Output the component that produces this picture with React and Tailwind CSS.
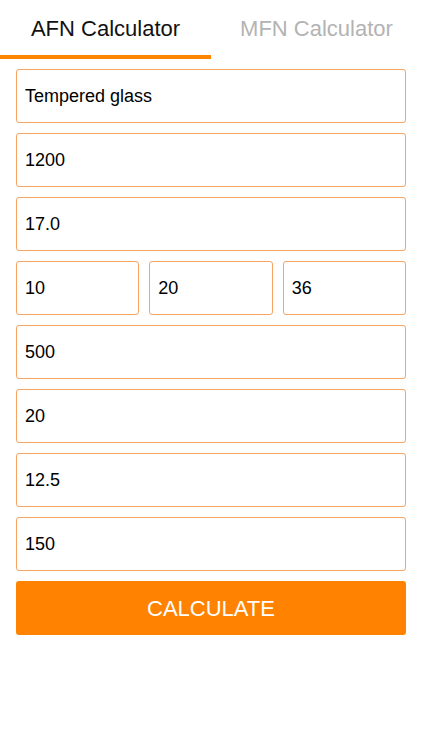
import React from "react";

const font = { fontFamily: '"Liberation Sans", Arial, sans-serif' };

function Field({ value, className = "" }) {
  return (
    <div
      className={`h-[54px] flex items-center px-2 border border-[#f5a462] rounded-[3px] text-[18px] text-black ${className}`}
    >
      {value}
    </div>
  );
}

export default function App() {
  return (
    <div className="w-[422px] h-[750px] bg-white" style={font}>
      <div className="flex h-[59px]">
        <div className="w-[211px] flex flex-col">
          <div className="flex-1 flex items-center justify-center pt-[1px] text-[22px] text-[#111]">
            AFN Calculator
          </div>
          <div className="h-[4px] bg-[#ff8500]" />
        </div>
        <div className="flex-1 flex flex-col">
          <div className="flex-1 flex items-center justify-center pt-[1px] text-[22px] text-[#b3b3b3]">
            MFN Calculator
          </div>
          <div className="h-[4px]" />
        </div>
      </div>
      <div className="px-4 pt-[10px] flex flex-col gap-[10px]">
        <Field value="Tempered glass" />
        <Field value="1200" />
        <Field value="17.0" />
        <div className="flex gap-[10px]">
          <Field value="10" className="flex-1" />
          <Field value="20" className="flex-1" />
          <Field value="36" className="flex-1" />
        </div>
        <Field value="500" />
        <Field value="20" />
        <Field value="12.5" />
        <Field value="150" />
        <div className="h-[54px] rounded-[3px] bg-[#ff8300] flex items-center justify-center text-white text-[22px]">
          CALCULATE
        </div>
      </div>
    </div>
  );
}
